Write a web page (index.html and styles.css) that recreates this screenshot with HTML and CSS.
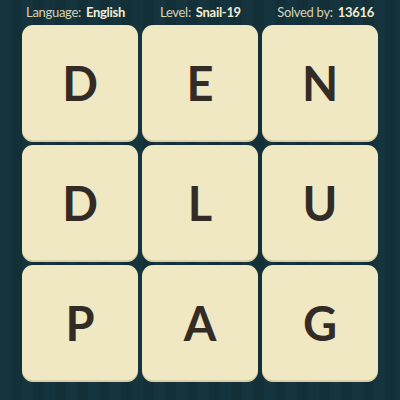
FILE: index.html
```html
<!DOCTYPE html>
<html>
<head>
<meta charset="utf-8">
<link rel="stylesheet" href="styles.css">
</head>
<body>
<div class="page">
  <div class="header">
    <span class="item">Language: <b>English</b></span>
    <span class="item">Level: <b>Snail-19</b></span>
    <span class="item last">Solved by: <b>13616</b></span>
  </div>
  <div class="board">
    <div class="tile">D</div>
    <div class="tile">E</div>
    <div class="tile">N</div>
    <div class="tile">D</div>
    <div class="tile">L</div>
    <div class="tile">U</div>
    <div class="tile">P</div>
    <div class="tile">A</div>
    <div class="tile">G</div>
  </div>
</div>
</body>
</html>
```
FILE: styles.css
```css
html, body {
  margin: 0;
  padding: 0;
}
.page {
  width: 400px;
  height: 400px;
  overflow: hidden;
  background-color: #15323a;
  background-image: repeating-linear-gradient(90deg, #16343d 0px, #16343d 11px, #133038 11px, #133038 22px);
  font-family: "Lato", "Open Sans", sans-serif;
}
.header {
  height: 25px;
  display: grid;
  grid-template-columns: 134px 1fr auto;
  align-items: center;
  padding: 0 26px 0 26px;
  color: #d9d3b5;
  font-size: 13px;
  letter-spacing: -0.3px;
  box-sizing: border-box;
}
.header .item {
  white-space: nowrap;
  margin-top: -2px;
}
.header .last {
  justify-self: end;
}
.header b {
  font-weight: 700;
  color: #f2ecd2;
  margin-left: 2px;
}
.board {
  display: grid;
  grid-template-columns: repeat(3, 116px);
  grid-template-rows: repeat(3, 117px);
  column-gap: 4px;
  row-gap: 3px;
  padding-left: 22px;
}
.tile {
  background: #f0e8c2;
  border-radius: 11px;
  box-shadow: inset 0 -2px 0 rgba(120, 100, 50, 0.18);
  display: flex;
  align-items: center;
  justify-content: center;
  font-size: 47px;
  font-weight: 700;
  color: #332c26;
  padding-bottom: 2px;
  box-sizing: border-box;
}
```
